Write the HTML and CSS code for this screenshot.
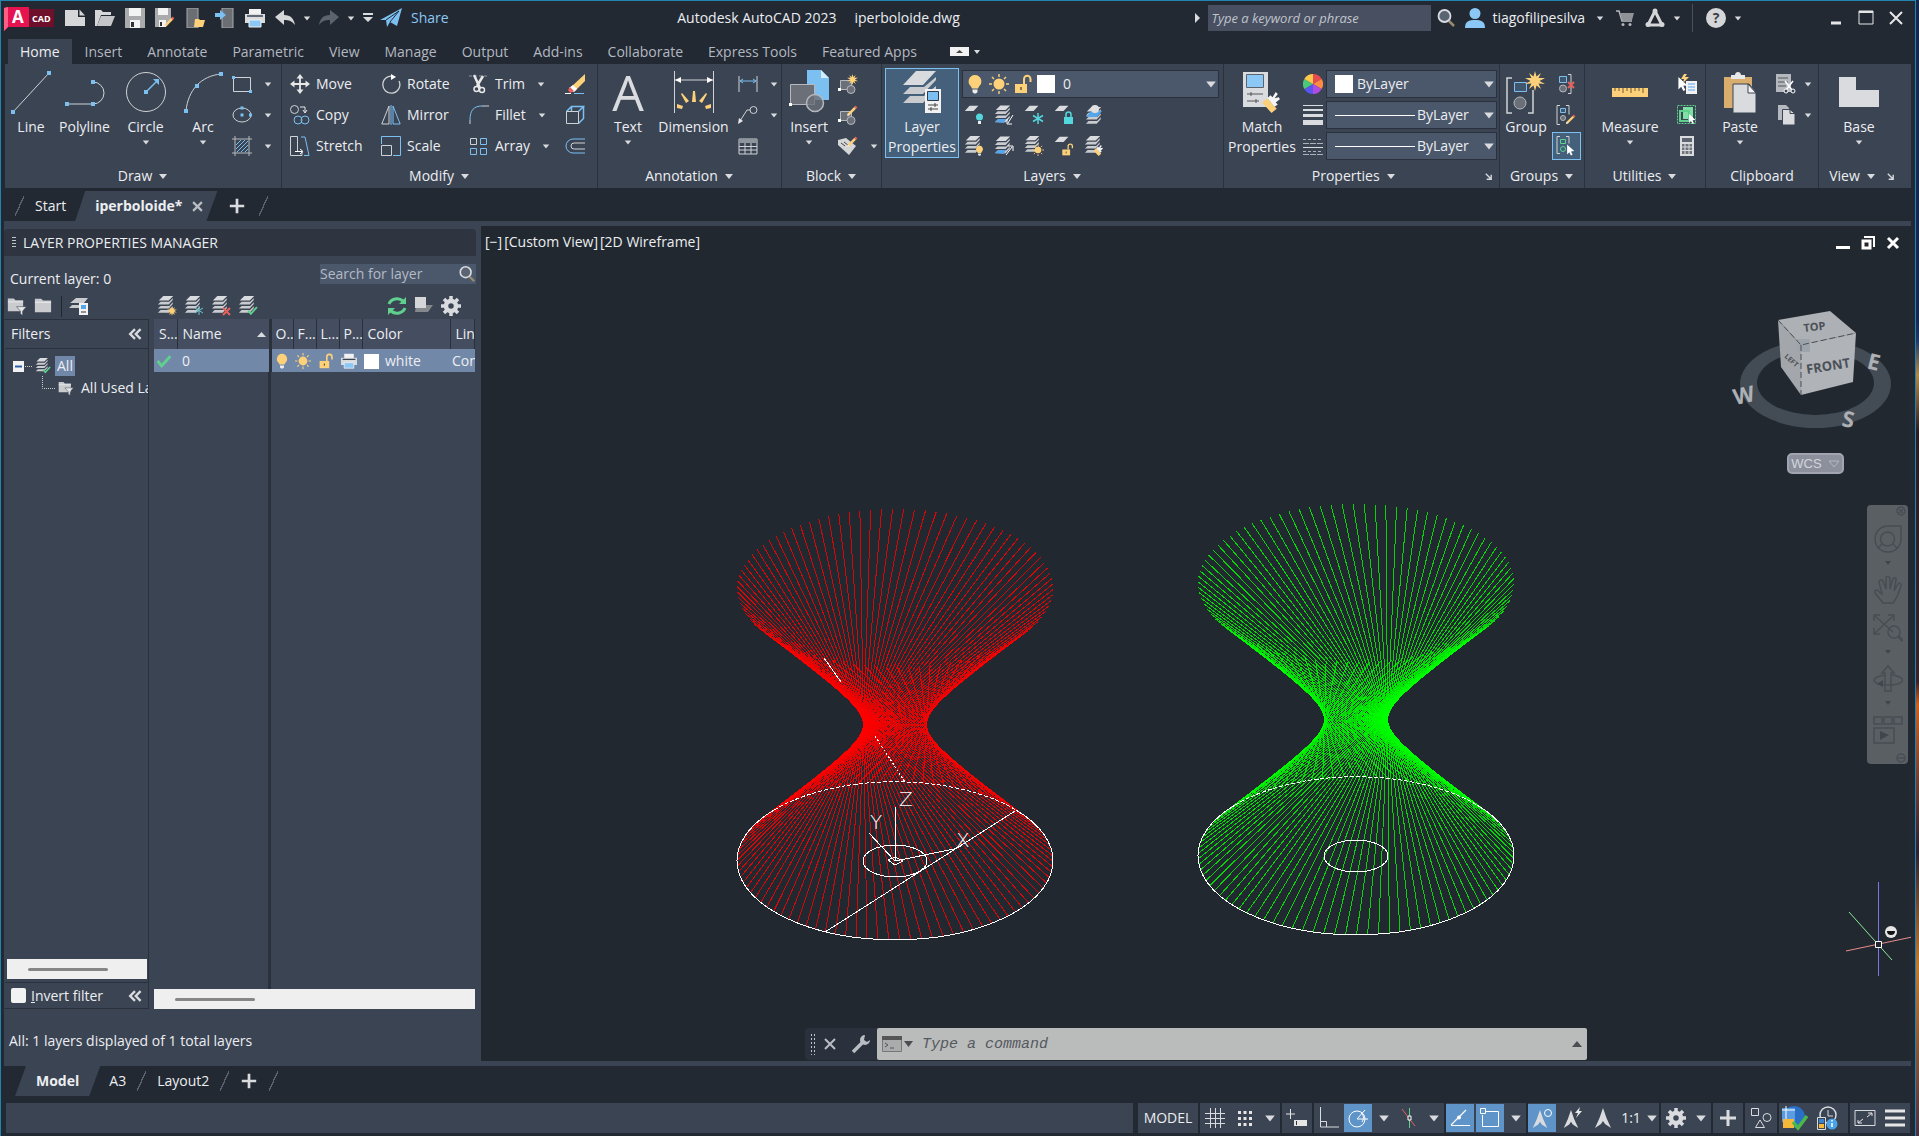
FILE: index.html
```html
<!DOCTYPE html>
<html lang="en">
<head>
<meta charset="utf-8">
<title>Autodesk AutoCAD 2023 - iperboloide.dwg</title>
<link rel="stylesheet" href="styles.css">
</head>
<body>
<svg class="sprite" aria-hidden="true">
  <symbol id="caret" viewBox="0 0 10 10"><path d="M1 3h8l-4 5z" fill="#d9dbde"/></symbol>
  <symbol id="launch" viewBox="0 0 10 10"><path d="M2 2l5 5M8 3v5H3" fill="none" stroke="#d9dbde" stroke-width="1.5"/></symbol>
  <symbol id="plus" viewBox="0 0 20 20"><path d="M10 2v16M2 10h16" stroke="#d9dbde" stroke-width="3"/></symbol>
  <symbol id="lens" viewBox="0 0 20 20"><path d="M13 13l5 5" stroke="#9a8b6c" stroke-width="2.500"/><circle cx="8.500" cy="8" r="6" fill="#5a6473" stroke="#d9dbde" stroke-width="1.800"/></symbol>
  <symbol id="folder" viewBox="0 0 20 20"><path d="M1 3h7l2 2h9v13H1z" fill="#c9cbce"/><path d="M1 7h18" stroke="#f0f0f0"/></symbol>
  <symbol id="layers" viewBox="0 0 20 20"><path d="M7 0h11l-5 5H2z" fill="#d9dbde"/><path d="M1 9.500L4 6.500h9.500L17.500 2.500v2L13 9.500z M1 14l3-3h9.500L17.500 7v2L13 14z M1 18.500l3-3h9.500l4-4v2l-4.500 5z" fill="#c9cbce"/></symbol>
  <symbol id="layer1" viewBox="0 0 20 20"><path d="M7 1h11l-6 6.500H1z" fill="#d9dbde"/></symbol>
  <symbol id="bulb" viewBox="0 0 20 20"><path d="M10 1a6.500 6.500 0 0 1 4 11.500l-1 2H7l-1-2A6.500 6.500 0 0 1 10 1z" fill="#fdd17a"/><path d="M7.500 15.500h5V18l-1.500 1.500H9L7.500 18z" fill="#eee"/></symbol>
  <symbol id="sun" viewBox="0 0 20 20"><circle cx="10" cy="10" r="5.500" fill="#fdd17a"/><path d="M10 0v3M10 17v3M0 10h3M17 10h3M3 3l2 2M15 15l2 2M17 3l-2 2M5 15l-2 2" stroke="#fdd17a" stroke-width="1.400"/></symbol>
  <symbol id="unlock" viewBox="0 0 20 20"><path d="M2 10h12v9H2z" fill="#fdd17a"/><path d="M11 10V5a3 3 0 0 1 6.500 0v3" fill="none" stroke="#fdd17a" stroke-width="2"/><path d="M8 13v3" stroke="#6b5a34" stroke-width="1.500"/></symbol>
  <symbol id="printer" viewBox="0 0 20 20"><path d="M4 1h12v6H4z" fill="#f2f2f2"/><path d="M0 6h20v9H0z" fill="#d9dbde"/><path d="M2 8h16" stroke="#3b4453" stroke-width="1.500"/><path d="M4 12h12v7H4z" fill="#8cc8f5" stroke="#eee"/></symbol>
  <symbol id="check" viewBox="0 0 20 20"><path d="M2 10l5 6L18 4" fill="none" stroke="#5fd08d" stroke-width="3.500"/></symbol>
  <symbol id="pencil" viewBox="0 0 20 20"><path d="M3 14L14 3l3 3L6 17l-4 1z" fill="#fdd17a"/><path d="M13.500 3.500L16 1l3 3-2.500 2.500z" fill="#e8605a"/><path d="M2 18l1-4 3 3z" fill="#eee"/></symbol>
  <symbol id="star" viewBox="0 0 20 20"><path d="M10 0l1.500 5.500L16 2l-2.500 5L20 7l-5.500 3L20 13l-6.500-.5L16 18l-4.500-3.500L10 20l-1.500-5.500L4 18l2.500-5.500L0 13l5.500-3L0 7l6.500 0L4 2l4.500 3.500z" fill="#fdd17a"/></symbol>
  <symbol id="brush" viewBox="0 0 20 20"><path d="M1 10l5-4 9 10-5 4z" fill="#fdd17a"/><path d="M6 6l3-3 2 2 3-5 2 2-3 4 4-1 1 2-4 3 2 2-3 2z" fill="#f5f5f5"/></symbol>
  <symbol id="gear" viewBox="0 0 20 20"><circle cx="10" cy="10" r="5" fill="none" stroke="#d9dbde" stroke-width="4.500"/><path d="M10 0v4M10 16v4M0 10h4M16 10h4M3 3l3 3M14 14l3 3M17 3l-3 3M6 14l-3 3" stroke="#d9dbde" stroke-width="3.500"/></symbol>
  <symbol id="chev" viewBox="0 0 20 20"><path d="M10 4l-6 6 6 6M17 4l-6 6 6 6" fill="none" stroke="#d9dbde" stroke-width="3"/></symbol>
  <symbol id="funnel" viewBox="0 0 20 20"><path d="M1 3h18l-7 8v8l-4-3v-5z" fill="#e6e6e6" stroke="#3b4453"/></symbol>
  <symbol id="arrowhead" viewBox="0 0 20 20"><path d="M10 0l3.500 10L18 20l-6-4-2-3-2 3-6 4 4.500-10z" fill="#d9dbde"/></symbol>
  <symbol id="pointer" viewBox="0 0 20 20"><path d="M2 0l13 12-6 .5 3 6-3 1.500-3-6-4 4z" fill="#fff"/></symbol>
</svg>

<div class="window">
  <header class="titlebar">
    <div class="quick">
      <button class="app-logo" aria-label="Application menu"><svg width="50" height="28" viewBox="0 0 50 28"><path d="M14 5h36v18H14z" fill="#6e0f2c"/><path d="M0 4l4-1h21v20H4l-4 4z" fill="#e5134f"/><path d="M0 4l4-1v20l-4 4z" fill="#ff5d83"/><text class="logo-a" x="8" y="19">A</text><text class="logo-cad" x="28" y="18">CAD</text></svg></button>
      <button class="cell" aria-label="New"><svg width="20" height="20" viewBox="0 0 20 20"><path d="M0 2h13v7h7v9H0z" fill="#d4d6d8"/><path d="M14.500 1.500L20 7.500h-5.500z" fill="#d4d6d8"/></svg></button>
      <button class="cell" aria-label="Open"><svg width="20" height="20" viewBox="0 0 20 20"><path d="M0 18V2h6l2 2h8v3H6L2 18z" fill="#d4d6d8"/><path d="M6 8h14l-4 10H2z" fill="#c3c5c8"/></svg></button>
      <button class="cell" aria-label="Save"><svg width="20" height="20" viewBox="0 0 20 20"><path d="M0 0h20v20H0z" fill="#a9abad"/><path d="M4 0h12v8H4zM5 12h10v8H5z" fill="#f3f3f3"/><path d="M6 14h3v5H6z" fill="#333"/></svg></button>
      <button class="cell" aria-label="Save As"><svg width="20" height="20" viewBox="0 0 20 20"><path d="M0 0h16v12l-6 7H0z" fill="#a9abad"/><path d="M3 0h10v7H3zM4 12h7v7H4z" fill="#f3f3f3"/><path d="M5 14h2v4H5z" fill="#333"/><use href="#pencil" x="8" y="8" width="12" height="12"/></svg></button>
      <button class="cell" aria-label="Open from mobile"><svg width="20" height="20" viewBox="0 0 20 20"><path d="M2 0h11v20H2z" fill="#6b6e72" stroke="#a9abad"/><path d="M10 11h4l1 1h5l-2 7h-9z" fill="#fdd17a"/></svg></button>
      <button class="cell" aria-label="Save to mobile"><svg width="20" height="20" viewBox="0 0 20 20"><path d="M7 0h11v20H7z" fill="#6b6e72" stroke="#a9abad"/><path d="M0 5h5V2l6 5-6 5V9H0z" fill="#7cc0f2"/></svg></button>
      <button class="cell" aria-label="Plot"><svg width="20" height="20"><use href="#printer"/></svg></button>
      <button class="cell" aria-label="Undo"><svg width="20" height="20" viewBox="0 0 20 20"><path d="M0 9l9-7v5c7 0 10 4 11 10-3-4-6-5-11-5v5z" fill="#d4d6d8"/></svg></button>
      <button class="cell slim" aria-label="Undo list"><svg width="8" height="8"><use href="#caret"/></svg></button>
      <button class="cell" aria-label="Redo"><svg width="20" height="20" viewBox="0 0 20 20"><path d="M20 9l-9-7v5C4 7 1 11 0 17c3-4 6-5 11-5v5z" fill="#5d636b"/></svg></button>
      <button class="cell slim" aria-label="Redo list"><svg width="8" height="8"><use href="#caret"/></svg></button>
      <button class="cell mid" aria-label="Customize toolbar"><svg width="10" height="12" viewBox="0 0 10 12"><path d="M0 1h10v2H0zM0 5h10l-5 5z" fill="#d9dbde"/></svg></button>
      <button class="share"><svg width="22" height="20" viewBox="0 0 22 20"><path d="M0 12L22 0l-5 18-7-4-3 5-1-7z" fill="#7cc0f2"/><path d="M6 12L19 3l-9 11" fill="none" stroke="#222933"/></svg>Share</button>
    </div>
    <h1 class="caption"><span>Autodesk AutoCAD 2023</span><span>iperboloide.dwg</span></h1>
    <div class="account">
      <button class="cell mid" aria-label="Toggle search"><svg width="6" height="10" viewBox="0 0 6 10"><path d="M0 0l5 5-5 5z" fill="#d9dbde"/></svg></button>
      <input class="help-search" type="text" placeholder="Type a keyword or phrase" aria-label="Type a keyword or phrase">
      <button class="cell" aria-label="Search"><svg width="20" height="20"><use href="#lens"/></svg></button>
      <button class="user"><svg width="20" height="20" viewBox="0 0 20 20"><circle cx="10" cy="5.500" r="5.500" fill="#8cc8f5"/><path d="M0 20c0-7 4-8 10-8s10 1 10 8z" fill="#8cc8f5"/></svg><span>tiagofilipesilva</span><svg width="8" height="8"><use href="#caret"/></svg></button>
      <button class="cell" aria-label="App store"><svg width="18" height="18" viewBox="0 0 18 18"><path d="M0 2h3l3 10h10" fill="none" stroke="#b5b7ba" stroke-width="1.500"/><path d="M4 4h14l-2 7H6z" fill="#8f9296"/><circle cx="7" cy="15.500" r="1.500" fill="#b5b7ba"/><circle cx="14" cy="15.500" r="1.500" fill="#b5b7ba"/></svg></button>
      <button class="cell" aria-label="Autodesk App"><svg width="20" height="20" viewBox="0 0 20 20"><path d="M10 3L3 17h14z" fill="none" stroke="#d4d6d8" stroke-width="3" stroke-linejoin="round"/><circle cx="10" cy="3" r="2.500" fill="#d4d6d8"/><circle cx="3" cy="16.500" r="2.500" fill="#d4d6d8"/><circle cx="17" cy="16.500" r="2.500" fill="#d4d6d8"/></svg></button>
      <button class="cell slim" aria-label="App list"><svg width="8" height="8"><use href="#caret"/></svg></button>
      <span class="rule"></span>
      <button class="cell help" aria-label="Help"><svg width="20" height="20" viewBox="0 0 20 20"><circle cx="10" cy="10" r="10" fill="#d4d6d8"/><text class="help-mark" x="10" y="15" text-anchor="middle">?</text></svg></button>
      <button class="cell slim" aria-label="Help list"><svg width="8" height="8"><use href="#caret"/></svg></button>
      <div class="winbuttons">
        <button class="cell" aria-label="Minimize"><svg width="16" height="16" viewBox="0 0 16 16"><path d="M3 13h10" stroke="#e6e6e6" stroke-width="3"/></svg></button>
        <button class="cell" aria-label="Maximize"><svg width="16" height="16" viewBox="0 0 16 16"><path d="M1 1h14v13H1z" fill="none" stroke="#e6e6e6"/><path d="M1 2h14" stroke="#e6e6e6" stroke-width="2"/></svg></button>
        <button class="cell" aria-label="Close"><svg width="16" height="16" viewBox="0 0 16 16"><path d="M2 2l12 12M14 2L2 14" stroke="#e6e6e6" stroke-width="2"/></svg></button>
      </div>
    </div>
  </header>

  <nav class="tabs">
    <a href="#home" class="on">Home</a><a href="#insert">Insert</a><a href="#annotate">Annotate</a><a href="#parametric">Parametric</a><a href="#view">View</a><a href="#manage">Manage</a><a href="#output">Output</a><a href="#addins">Add-ins</a><a href="#collaborate">Collaborate</a><a href="#express">Express Tools</a><a href="#featured">Featured Apps</a>
    <button class="minimize" aria-label="Minimize ribbon"><svg width="30" height="10" viewBox="0 0 30 10"><path d="M0 0h19v9H0z" fill="#f2f2f2"/><path d="M6 6h7L9.500 3z" fill="#444"/><path d="M24 3h6l-3 4z" fill="#d9dbde"/></svg></button>
  </nav>

  <section class="ribbon">
    <div class="panel">
      <div class="body draw">
        <button class="big"><svg width="40" height="44" viewBox="0 0 40 44"><path d="M2 42L38 3" stroke="#cfd2d6"/><path d="M0 40h4v4H0zM36 1h4v4h-4z" fill="#7cc0f2"/></svg><span>Line</span></button>
        <button class="big"><svg width="40" height="44" viewBox="0 0 40 44"><path d="M2 34h26a11 11 0 0 0 0-22" fill="none" stroke="#cfd2d6"/><path d="M0 32h4v4H0zM26 32h4v4h-4zM26 10h4v4h-4z" fill="#7cc0f2"/></svg><span>Polyline</span></button>
        <button class="big"><svg width="42" height="44" viewBox="0 0 42 44"><circle cx="21" cy="22" r="19.500" fill="none" stroke="#cfd2d6"/><path d="M21 22L32 11" stroke="#7cc0f2" stroke-width="1.500"/><path d="M19 20h4v4h-4zM28 9h6v6z" fill="#7cc0f2"/></svg><span>Circle</span><svg width="8" height="8"><use href="#caret"/></svg></button>
        <button class="big"><svg width="40" height="44" viewBox="0 0 40 44"><path d="M3 41C5 20 18 6 38 4" fill="none" stroke="#cfd2d6"/><path d="M1 39h4v4H1zM12 14h4v4h-4zM36 2h4v4h-4z" fill="#7cc0f2"/></svg><span>Arc</span><svg width="8" height="8"><use href="#caret"/></svg></button>
        <div class="stack">
          <button class="sm" aria-label="Rectangle"><svg width="20" height="20" viewBox="0 0 20 20"><path d="M1.500 3.500h17v14h-17z" fill="none" stroke="#cfd2d6"/><path d="M0 2h3v3H0zM17 16h3v3h-3z" fill="#7cc0f2"/></svg><svg class="dd" width="8" height="8"><use href="#caret"/></svg></button>
          <button class="sm" aria-label="Ellipse"><svg width="20" height="20" viewBox="0 0 20 20"><ellipse cx="10" cy="10" rx="9" ry="7" fill="none" stroke="#cfd2d6"/><path d="M8.500 8.500h3v3h-3zM17 8.500h3v3h-3zM8.500 1.500h3v3h-3z" fill="#7cc0f2"/></svg><svg class="dd" width="8" height="8"><use href="#caret"/></svg></button>
          <button class="sm" aria-label="Hatch"><svg width="20" height="20" viewBox="0 0 20 20"><path d="M3 0v20M17 0v20M0 3h20M0 17h20" stroke="#b5b9bf"/><path d="M4 9l5-5M4 13l9-9M5 16L16 5M9 16l7-7M13 16l3-3" stroke="#7cc0f2"/></svg><svg class="dd" width="8" height="8"><use href="#caret"/></svg></button>
        </div>
      </div>
      <button class="ptitle">Draw <svg width="10" height="10"><use href="#caret"/></svg></button>
    </div>

    <div class="panel">
      <div class="body modify">
        <div class="stack">
          <button class="sm"><svg width="20" height="20" viewBox="0 0 20 20"><path d="M10 2v16M2 10h16" stroke="#e8e8e8" stroke-width="1.800"/><path d="M10 0l3.500 4.500h-7zM10 20l3.500-4.500h-7zM0 10l4.500-3.500v7zM20 10l-4.500-3.500v7z" fill="#e8e8e8"/></svg>Move</button>
          <button class="sm"><svg width="20" height="20" viewBox="0 0 20 20"><circle cx="4.500" cy="4.500" r="4" fill="none" stroke="#cfd2d6"/><path d="M10 2h5v5M13 5l2 3 2-3" fill="none" stroke="#e8e8e8"/><circle cx="8" cy="15" r="4" fill="none" stroke="#7cc0f2"/><circle cx="15" cy="15" r="4" fill="none" stroke="#7cc0f2"/></svg>Copy</button>
          <button class="sm"><svg width="20" height="20" viewBox="0 0 20 20"><path d="M.5.500h7v15H12v4H.500z" fill="none" stroke="#cfd2d6"/><path d="M11 1h4l4 18.500h-5" fill="none" stroke="#7cc0f2"/><path d="M5 15.500h7M10 13l3 2.500-3 2.500" fill="none" stroke="#fff"/></svg>Stretch</button>
        </div>
        <div class="stack">
          <button class="sm"><svg width="20" height="20" viewBox="0 0 20 20"><path d="M14 3a8.500 8.500 0 1 0 4 4" fill="none" stroke="#cfd2d6" stroke-width="1.300"/><path d="M10 0l5 3-5 3z" fill="#fff"/></svg>Rotate</button>
          <button class="sm"><svg width="20" height="20" viewBox="0 0 20 20"><path d="M8 1v18H.800z" fill="none" stroke="#cfd2d6"/><path d="M12 1v18h7.200z" fill="none" stroke="#7cc0f2"/><path d="M10 0v20" stroke="#7cc0f2"/></svg>Mirror</button>
          <button class="sm"><svg width="20" height="20" viewBox="0 0 20 20"><path d="M.5 8V.500h19v19H12" fill="none" stroke="#7cc0f2"/><path d="M.5 9.500h10v10H.500z" fill="none" stroke="#cfd2d6"/></svg>Scale</button>
        </div>
        <div class="stack">
          <button class="sm"><svg width="20" height="20" viewBox="0 0 20 20"><path d="M0 2h20" stroke="#8f959d" stroke-dasharray="3 2"/><path d="M5 1l6 13M14 2L8 12" stroke="#e8e8e8" stroke-width="2.500"/><circle cx="7.500" cy="15" r="2.500" fill="none" stroke="#e8e8e8" stroke-width="1.500"/><circle cx="13" cy="16" r="2.500" fill="none" stroke="#e8e8e8" stroke-width="1.500"/></svg>Trim<svg class="dd" width="8" height="8"><use href="#caret"/></svg></button>
          <button class="sm"><svg width="20" height="20" viewBox="0 0 20 20"><path d="M1 19v-4" stroke="#cfd2d6"/><path d="M1 15C1 5 5 1 13 1" fill="none" stroke="#7cc0f2"/><path d="M13 1h7" stroke="#cfd2d6"/></svg>Fillet<svg class="dd" width="8" height="8"><use href="#caret"/></svg></button>
          <button class="sm"><svg width="20" height="20" viewBox="0 0 20 20"><path d="M1.500 2.500h6v6h-6z" fill="none" stroke="#cfd2d6"/><path d="M11.500 2.500h6v6h-6zM1.500 12.500h6v6h-6zM11.500 12.500h6v6h-6z" fill="none" stroke="#7cc0f2"/></svg>Array<svg class="dd" width="8" height="8"><use href="#caret"/></svg></button>
        </div>
        <div class="stack">
          <button class="sm" aria-label="Erase"><svg width="20" height="20" viewBox="0 0 20 20"><path d="M0 19.500h6" stroke="#fff"/><path d="M9 19.500h10" stroke="#7cc0f2"/><path d="M20 0v7L10 17l-4-4z" fill="#fdd17a"/><path d="M8 11l4 4-3 3-4-1-1-3z" fill="#fff"/><path d="M5 13l4 4-4 2-2-3z" fill="#e8605a"/></svg></button>
          <button class="sm" aria-label="Explode"><svg width="20" height="20" viewBox="0 0 20 20"><path d="M1.500 6.500l5-5h12l-5 5M18.500 1.500v12l-5 5M6.500 1.500v5" fill="none" stroke="#7cc0f2" stroke-width="1.500"/><path d="M1.500 6.500h12v12h-12z" fill="none" stroke="#cfd2d6"/></svg></button>
          <button class="sm" aria-label="Offset"><svg width="20" height="20" viewBox="0 0 20 20"><path d="M20 3H8a7 7 0 0 0 0 14h12" fill="none" stroke="#7cc0f2"/><path d="M20 7H9a3 3 0 0 0 0 6h11" fill="none" stroke="#cfd2d6"/></svg></button>
        </div>
      </div>
      <button class="ptitle">Modify <svg width="10" height="10"><use href="#caret"/></svg></button>
    </div>

    <div class="panel">
      <div class="body annotation">
        <button class="big"><svg width="34" height="44" viewBox="0 0 34 44"><text class="big-a" x="17" y="41" text-anchor="middle">A</text></svg><span>Text</span><svg width="8" height="8"><use href="#caret"/></svg></button>
        <button class="big"><svg width="40" height="44" viewBox="0 0 40 44"><path d="M.500 1v42M39.500 1v42M1 10h38" stroke="#cfd2d6"/><path d="M1 10l6-3v6zM39 10l-6-3v6z" fill="#fff"/><path d="M18 32h4l-1-11h-2zM25 31l3 2 5-9-1-1zM15 31l-3 2-5-9 1-1zM31 36l1 3 5-1v-4zM9 36l-1 3-5-1v-4z" fill="#fdd17a"/></svg><span>Dimension</span></button>
        <div class="stack">
          <button class="sm" aria-label="Linear"><svg width="20" height="20" viewBox="0 0 20 20"><path d="M1 2v16M19 2v16" stroke="#cfd2d6"/><path d="M2 7h16M5 5L2 7l3 2M15 5l3 2-3 2" fill="none" stroke="#7cc0f2"/></svg><svg class="dd" width="8" height="8"><use href="#caret"/></svg></button>
          <button class="sm" aria-label="Leader"><svg width="20" height="20" viewBox="0 0 20 20"><circle cx="15.500" cy="5" r="3.500" fill="none" stroke="#cfd2d6"/><path d="M12 5H9L2 16" fill="none" stroke="#cfd2d6"/><path d="M0 19l1-6 4 3z" fill="#e8e8e8"/></svg><svg class="dd" width="8" height="8"><use href="#caret"/></svg></button>
          <button class="sm" aria-label="Table"><svg width="20" height="20" viewBox="0 0 20 20"><path d="M1 3h18v15H1zM1 10.500h18M1 14h18M7 6v12M13 6v12" fill="none" stroke="#cfd2d6"/><path d="M1 3h18v4H1z" fill="#8f959d"/></svg></button>
        </div>
      </div>
      <button class="ptitle">Annotation <svg width="10" height="10"><use href="#caret"/></svg></button>
    </div>

    <div class="panel">
      <div class="body block">
        <button class="big"><svg width="40" height="44" viewBox="0 0 40 44"><path d="M18 0h14l8 8v22H18z" fill="#7cc0f2"/><path d="M32 0l8 8h-8z" fill="#d2ebfd"/><path d="M1.500 14.500h24v20h-24z" fill="#6b7078" stroke="#b5b9bf"/><circle cx="26" cy="33" r="8.500" fill="#6b7078" fill-opacity=".8" stroke="#b5b9bf" stroke-width="1.500"/><path d="M0 33h3v3H0z" fill="#fff"/></svg><span>Insert</span><svg width="8" height="8"><use href="#caret"/></svg></button>
        <div class="stack">
          <button class="sm" aria-label="Create block"><svg width="20" height="20" viewBox="0 0 20 20"><path d="M2.500 6.500h11v9h-11z" fill="#6b7078" stroke="#b5b9bf"/><circle cx="13" cy="15.500" r="4" fill="#6b7078" stroke="#b5b9bf"/><path d="M0 14h3v3H0z" fill="#fff"/><use href="#star" x="9" y="0" width="11" height="11"/></svg></button>
          <button class="sm" aria-label="Edit block"><svg width="20" height="20" viewBox="0 0 20 20"><path d="M2.500 6.500h11v9h-11z" fill="#6b7078" stroke="#b5b9bf"/><circle cx="13" cy="15.500" r="4" fill="#6b7078" stroke="#b5b9bf"/><path d="M0 14h3v3H0z" fill="#fff"/><use href="#pencil" x="8" y="0" width="12" height="12"/></svg></button>
          <button class="sm" aria-label="Edit attributes"><svg width="20" height="20" viewBox="0 0 20 20"><path d="M0 4l8-2 10 8-7 9L0 9z" fill="#d4d6d8"/><path d="M3 7l4 3M6 6l5 4" stroke="#444"/><use href="#pencil" x="8" y="0" width="12" height="12"/></svg><svg class="dd" width="8" height="8"><use href="#caret"/></svg></button>
        </div>
      </div>
      <button class="ptitle">Block <svg width="10" height="10"><use href="#caret"/></svg></button>
    </div>

    <div class="panel">
      <div class="body layerpanel">
        <button class="big pressed"><svg width="40" height="44" viewBox="0 0 40 44"><path d="M14 1h20L21 15H1z" fill="#d9dbde"/><path d="M1 24l7-7h14L34 7v3L21 24zM1 33l7-7h14l12-10v3L21 33z" fill="#c9cbce"/><path d="M23 19h16v24H23z" fill="#f2f2f2"/><path d="M25.500 21.500h11v9h-11z" fill="#7cc0f2" stroke="#2d3b4d"/><path d="M26 35h10M26 39h10M33 33v4M29 37v4" stroke="#444"/></svg><span>Layer<br>Properties</span></button>
        <div class="stack">
          <label class="combo"><svg width="20" height="20"><use href="#bulb"/></svg><svg width="20" height="20"><use href="#sun"/></svg><svg width="20" height="20"><use href="#unlock"/></svg><i class="swatch"></i><select aria-label="Layer"><option>0</option></select><svg width="12" height="12"><use href="#caret"/></svg></label>
          <div class="iconrow">
            <button aria-label="Off"><svg width="20" height="20" viewBox="0 0 20 20"><use href="#layer1" width="16" height="16"/><circle cx="15.500" cy="12" r="3.500" fill="#54d7dc"/><path d="M14 16h3v3h-3z" fill="#eee"/></svg></button>
            <button aria-label="Isolate"><svg width="20" height="20" viewBox="0 0 20 20"><use href="#layers" width="18" height="19"/><path d="M1 17l3-3h8l-2 4z" fill="#58a6ea"/><path d="M19 10l-5 8M13 14v5h5" fill="none" stroke="#fff"/></svg></button>
            <button aria-label="Freeze"><svg width="20" height="20" viewBox="0 0 20 20"><use href="#layer1" width="16" height="16"/><path d="M14 8v11M9 10.500l10 6M19 10.500l-10 6" stroke="#54d7dc" stroke-width="1.500"/></svg></button>
            <button aria-label="Lock"><svg width="20" height="20" viewBox="0 0 20 20"><use href="#layer1" width="16" height="16"/><path d="M10 12h9v7h-9z" fill="#54d7dc"/><path d="M12 12V9.500a2.500 2.500 0 0 1 5 0V12" fill="none" stroke="#54d7dc" stroke-width="1.500"/></svg></button>
            <button aria-label="Make current"><svg width="20" height="20" viewBox="0 0 20 20"><use href="#layers" y="2" width="20" height="18"/><path d="M7 6h11l-5 6H2z" fill="#58a6ea"/><circle cx="11" cy="4" r="4" fill="#e0e0e0"/></svg></button>
          </div>
          <div class="iconrow">
            <button aria-label="All on"><svg width="20" height="20" viewBox="0 0 20 20"><use href="#layers" width="18" height="18"/><use href="#bulb" x="10" y="9" width="11" height="11"/></svg></button>
            <button aria-label="Unisolate"><svg width="20" height="20" viewBox="0 0 20 20"><use href="#layers" width="18" height="19"/><path d="M1 17l3-3h8l-2 4z" fill="#58a6ea"/><path d="M12 19l6-8M14 10h5v5" fill="none" stroke="#fff"/></svg></button>
            <button aria-label="Thaw all"><svg width="20" height="20" viewBox="0 0 20 20"><use href="#layers" width="17" height="17"/><use href="#sun" x="8" y="8" width="12" height="12"/></svg></button>
            <button aria-label="Unlock"><svg width="20" height="20" viewBox="0 0 20 20"><use href="#layer1" width="16" height="16"/><use href="#unlock" x="7" y="7" width="13" height="13"/></svg></button>
            <button aria-label="Match layer"><svg width="20" height="20" viewBox="0 0 20 20"><use href="#layers" width="18" height="18"/><use href="#brush" x="9" y="9" width="11" height="11"/></svg></button>
          </div>
        </div>
      </div>
      <button class="ptitle">Layers <svg width="10" height="10"><use href="#caret"/></svg></button>
    </div>

    <div class="panel">
      <div class="body props">
        <button class="big"><svg width="40" height="44" viewBox="0 0 40 44"><path d="M1 2h25v35H1z" fill="#d9dbde"/><path d="M4.500 4.500h17v13h-17z" fill="#8cc8f5" stroke="#5b646f"/><path d="M5 24h16M5 31h12M9 22v4M14 29v4" stroke="#555"/><use href="#brush" x="19" y="22" width="21" height="21"/></svg><span>Match<br>Properties</span></button>
        <div class="stack marks">
          <div class="mark"><svg width="20" height="20" viewBox="-10 -10 20 20"><path d="M0 0V-10A10 10 0 0 1 8.700-5z" fill="#e84c4c"/><path d="M0 0L8.700-5A10 10 0 0 1 8.700 5z" fill="#ff8c42"/><path d="M0 0L8.700 5A10 10 0 0 1 0 10z" fill="#b04ce0"/><path d="M0 0V10A10 10 0 0 1-8.700 5z" fill="#5a55ee"/><path d="M0 0L-8.700 5A10 10 0 0 1-8.700-5z" fill="#4cc87a"/><path d="M0 0L-8.700-5A10 10 0 0 1 0-10z" fill="#fdc84c"/></svg></div>
          <div class="mark"><svg width="20" height="20" viewBox="0 0 20 20"><path d="M0 0h20v1H0zM0 4h20v2H0zM0 9h20v3H0zM0 15h20v5H0z" fill="#d9dbde"/></svg></div>
          <div class="mark"><svg width="20" height="20" viewBox="0 0 20 20"><path d="M0 3.500h20M0 15.500h20" stroke="#aeb2b8" stroke-dasharray="3 2"/><path d="M0 7.500h20M0 18.500h20" stroke="#aeb2b8" stroke-dasharray="6 1"/><path d="M0 11.500h20" stroke="#d9dbde"/></svg></div>
        </div>
        <div class="stack">
          <label class="combo"><i class="swatch"></i><select aria-label="Object color"><option>ByLayer</option></select><svg width="12" height="12"><use href="#caret"/></svg></label>
          <label class="combo"><i class="stroke"></i><select aria-label="Lineweight"><option>ByLayer</option></select><svg width="12" height="12"><use href="#caret"/></svg></label>
          <label class="combo"><i class="stroke"></i><select aria-label="Linetype"><option>ByLayer</option></select><svg width="12" height="12"><use href="#caret"/></svg></label>
        </div>
      </div>
      <div class="titlerow"><button class="ptitle">Properties <svg width="10" height="10"><use href="#caret"/></svg></button><button class="launch" aria-label="Properties palette"><svg width="9" height="9"><use href="#launch"/></svg></button></div>
    </div>

    <div class="panel">
      <div class="body groups">
        <button class="big"><svg width="40" height="44" viewBox="0 0 40 44"><path d="M6 8H1v35h5M22 43h5V20" fill="none" stroke="#cfd2d6" stroke-width="1.500"/><path d="M8.500 12.500h12v9h-12z" fill="#40566d" stroke="#7cc0f2"/><circle cx="14" cy="33" r="6" fill="#6b7078" stroke="#b5b9bf"/><use href="#star" x="19" y="1" width="20" height="20"/></svg><span>Group</span></button>
        <div class="stack">
          <button class="sm" aria-label="Ungroup"><svg width="20" height="20" viewBox="0 0 20 20"><path d="M3.500 2.500h7v6h-7z" fill="#40566d" stroke="#7cc0f2"/><circle cx="7" cy="14.500" r="3.500" fill="#6b7078" stroke="#b5b9bf"/><path d="M12 .500h3v19h-3" fill="none" stroke="#cfd2d6"/><path d="M12 8l6 6M18 8l-6 6" stroke="#e8605a" stroke-width="2"/></svg></button>
          <button class="sm" aria-label="Edit group"><svg width="20" height="20" viewBox="0 0 20 20"><path d="M4 .500H1v19h3M10 .500h3v9" fill="none" stroke="#cfd2d6"/><path d="M4.500 3.500h5v4h-5z" fill="#40566d" stroke="#7cc0f2"/><circle cx="7" cy="13" r="2.500" fill="#6b7078" stroke="#b5b9bf"/><use href="#pencil" x="9" y="9" width="11" height="11"/></svg></button>
          <button class="sm pressed" aria-label="Group selection"><svg width="20" height="20" viewBox="0 0 20 20"><path d="M4 .500H1v17h3M10 .500h3v7" fill="none" stroke="#cfd2d6"/><path d="M4.500 3.500h5v4h-5z" fill="none" stroke="#5fd08d"/><circle cx="7" cy="13" r="2.500" fill="none" stroke="#5fd08d"/><use href="#pointer" x="10" y="8" width="11" height="12"/></svg></button>
        </div>
      </div>
      <button class="ptitle">Groups <svg width="10" height="10"><use href="#caret"/></svg></button>
    </div>

    <div class="panel">
      <div class="body utils">
        <button class="big"><svg width="40" height="44" viewBox="0 0 40 44"><path d="M2 18h36v9H2z" fill="#fdd17a"/><path d="M5 18v3M9 18v3M13 18v5M17 18v3M21 18v5M25 18v3M29 18v3M33 18v5" stroke="#70592c"/></svg><span>Measure</span><svg width="8" height="8"><use href="#caret"/></svg></button>
        <div class="stack">
          <button class="sm" aria-label="Quick select"><svg width="20" height="20" viewBox="0 0 20 20"><path d="M9 7h11v13H9z" fill="#f2f2f2"/><path d="M11 10h7M11 13h7M11 16h7" stroke="#58a6ea"/><use href="#pointer" x="0" y="2" width="14" height="16"/><path d="M7 0L4 5h3l-1 4 6-6H8l2-3z" fill="#fdd17a"/></svg></button>
          <button class="sm" aria-label="Select all"><svg width="20" height="20" viewBox="0 0 20 20"><path d="M.500.500h18v18H.500z" fill="none" stroke="#5fd08d" stroke-dasharray="2 1"/><path d="M6 2h10v12H6z" fill="#7fe0a5"/><path d="M3 6h9v10H3z" fill="none" stroke="#5fd08d" stroke-width="2"/><use href="#pointer" x="11" y="8" width="10" height="12"/></svg></button>
          <button class="sm" aria-label="Calculator"><svg width="20" height="20" viewBox="0 0 20 20"><path d="M3 0h14v20H3z" fill="#d9dbde"/><path d="M5 2h10v4H5z" fill="#5b646f"/><path d="M5 8h10v10H5z" fill="#70757c"/><path d="M5 11h10M5 14.500h10M8 8v10M12 8v10" stroke="#d9dbde"/></svg></button>
        </div>
      </div>
      <button class="ptitle">Utilities <svg width="10" height="10"><use href="#caret"/></svg></button>
    </div>

    <div class="panel">
      <div class="body clip">
        <button class="big"><svg width="34" height="44" viewBox="0 0 34 44"><path d="M1 7h28v31H1z" fill="#d9ad6e"/><path d="M8 9V5h4c0-4 6-4 6 0h4v4z" fill="#e8e8e8"/><path d="M10 14h16l7 8v21H10z" fill="#d9dbde" stroke="#3b4453"/><path d="M25 14v9h8z" fill="#f5f5f5" stroke="#3b4453"/></svg><span>Paste</span><svg width="8" height="8"><use href="#caret"/></svg></button>
        <div class="stack">
          <button class="sm" aria-label="Cut"><svg width="20" height="20" viewBox="0 0 20 20"><path d="M0 0h15v18H0z" fill="#b5b9bf"/><path d="M2 4h10M2 8h10M2 12h8" stroke="#555"/><path d="M9 7l7 9M17 7l-7 9" stroke="#fff" stroke-width="1.500"/><circle cx="10" cy="17" r="2" fill="#3b4453" stroke="#fff"/><circle cx="17" cy="17" r="2" fill="#3b4453" stroke="#fff"/></svg><svg class="dd" width="8" height="8"><use href="#caret"/></svg></button>
          <button class="sm" aria-label="Copy"><svg width="20" height="20" viewBox="0 0 20 20"><path d="M2 0h8l3 3v12H2z" fill="#b5b9bf"/><path d="M6.500 4.500H14l5 4V20H6.500z" fill="#d9dbde" stroke="#3b4453"/><path d="M14 4.500v4h5" fill="none" stroke="#3b4453"/></svg><svg class="dd" width="8" height="8"><use href="#caret"/></svg></button>
        </div>
      </div>
      <span class="ptitle">Clipboard</span>
    </div>

    <div class="panel">
      <div class="body base">
        <button class="big"><svg width="40" height="44" viewBox="0 0 40 44"><path d="M0 7h17v13h23v17H0z" fill="#d9dbde"/></svg><span>Base</span><svg width="8" height="8"><use href="#caret"/></svg></button>
      </div>
      <div class="titlerow"><button class="ptitle">View <svg width="10" height="10"><use href="#caret"/></svg></button><button class="launch" aria-label="View settings"><svg width="9" height="9"><use href="#launch"/></svg></button></div>
    </div>
  </section>

  <nav class="filetabs">
    <i class="slash"></i><a href="#start">Start</a>
    <a href="#iperboloide" class="active">iperboloide*<svg width="11" height="11" viewBox="0 0 10 10"><path d="M1 1l8 8M9 1L1 9" stroke="#b9bdc3" stroke-width="2"/></svg></a>
    <button aria-label="New drawing"><svg width="18" height="18"><use href="#plus"/></svg></button><i class="slash"></i>
  </nav>

  <main class="work">
    <aside class="palette">
      <h2><i class="grip"></i>LAYER PROPERTIES MANAGER</h2>
      <div class="current"><span>Current layer: 0</span><label class="layersearch"><input type="text" placeholder="Search for layer" aria-label="Search for layer"><svg width="18" height="18"><use href="#lens"/></svg></label></div>
      <div class="toolrow">
        <div class="group first">
          <button aria-label="New property filter"><svg width="20" height="20" viewBox="0 0 20 20"><use href="#folder" width="17" height="17"/><use href="#funnel" x="9" y="9" width="11" height="11"/></svg></button>
          <button aria-label="New group filter"><svg width="20" height="20" viewBox="0 0 20 20"><use href="#folder" width="18" height="18"/></svg></button>
          <i class="vrule"></i>
          <button aria-label="Layer states"><svg width="20" height="20" viewBox="0 0 20 20"><path d="M7 2h12l-4 5H1zM3 9h7v3H0z" fill="#c9cbce"/><path d="M10 7h9v12h-9z" fill="#f2f2f2"/><path d="M12 9h5v4h-5z" fill="#58a6ea"/><path d="M12 16h5" stroke="#333"/></svg></button>
        </div>
        <div class="group">
          <button aria-label="New layer"><svg width="20" height="20" viewBox="0 0 20 20"><use href="#layers" width="18" height="18"/><use href="#star" x="10" y="10" width="10" height="10"/></svg></button>
          <button aria-label="New frozen layer"><svg width="20" height="20" viewBox="0 0 20 20"><use href="#layers" width="18" height="18"/><path d="M15 10v9M11 12l8 5M19 12l-8 5" stroke="#6fc4cf"/></svg></button>
          <button aria-label="Delete layer"><svg width="20" height="20" viewBox="0 0 20 20"><use href="#layers" width="18" height="18"/><path d="M12 12l7 7M19 12l-7 7" stroke="#e8605a" stroke-width="2"/></svg></button>
          <button aria-label="Set current"><svg width="20" height="20" viewBox="0 0 20 20"><use href="#layers" width="18" height="18"/><use href="#check" x="9" y="9" width="11" height="11"/></svg></button>
        </div>
        <div class="group last">
          <button aria-label="Refresh"><svg width="20" height="20" viewBox="0 0 20 20"><path d="M2 8a8.500 7.500 0 0 1 14-3M18 12a8.500 7.500 0 0 1-14 3" fill="none" stroke="#5fd08d" stroke-width="3"/><path d="M19 1v7h-7zM1 19v-7h7z" fill="#5fd08d"/></svg></button>
          <button aria-label="Toggle override"><svg width="20" height="20" viewBox="0 0 20 20"><path d="M2 10l-1 6h13l5-7h-7" fill="#85888c"/><path d="M1 1h11v11H1z" fill="#d4d6d8"/></svg></button>
          <button aria-label="Settings"><svg width="20" height="20"><use href="#gear"/></svg></button>
        </div>
      </div>
      <div class="lists">
        <div class="filters">
          <div class="fhead">Filters<svg width="16" height="16"><use href="#chev"/></svg></div>
          <ul class="tree">
            <li><svg width="20" height="12" viewBox="0 0 20 12"><path d="M0 1h11v11H0z" fill="#f2f2f2"/><path d="M2 6.500h7" stroke="#2d5fa8" stroke-width="2"/><path d="M12 6.500h8" stroke="#ccc" stroke-dasharray="1 1"/></svg><svg width="16" height="16" viewBox="0 0 20 20"><use href="#layers" width="18" height="18"/><use href="#check" x="9" y="9" width="11" height="11"/></svg><b>All</b></li>
            <li class="child"><svg width="14" height="24" viewBox="0 0 14 24"><path d="M.500 0v12.500H14" fill="none" stroke="#ccc" stroke-dasharray="1 1"/></svg><svg width="16" height="16" viewBox="0 0 20 20"><use href="#folder" width="17" height="17"/><use href="#funnel" x="8" y="8" width="12" height="12"/></svg>All Used Layers</li>
          </ul>
          <div class="scroll"><i></i></div>
          <div class="invert"><label><input type="checkbox"><span><u>I</u>nvert filter</span></label><svg width="16" height="16"><use href="#chev"/></svg></div>
        </div>
        <div class="layertable">
          <table>
            <thead><tr><th class="c-s">S...</th><th class="c-name">Name<svg width="9" height="5" viewBox="0 0 9 5"><path d="M0 5h9L4.500 0z" fill="#d9dbde"/></svg></th><th class="c-i">O..</th><th class="c-i">F...</th><th class="c-i">L...</th><th class="c-i">P...</th><th class="c-color">Color</th><th>Linetype</th></tr></thead>
            <tbody><tr><td><svg width="16" height="16"><use href="#check"/></svg></td><td class="c-name">0</td><td><svg width="16" height="16"><use href="#bulb"/></svg></td><td><svg width="16" height="16"><use href="#sun"/></svg></td><td><svg width="16" height="16"><use href="#unlock"/></svg></td><td><svg width="16" height="16"><use href="#printer"/></svg></td><td><i class="swatch small"></i>white</td><td>Continuous</td></tr></tbody>
          </table>
          <div class="scroll"><i></i></div>
        </div>
      </div>
      <p class="count">All: 1 layers displayed of 1 total layers</p>
    </aside>

    <section class="drawing">
      <svg class="model" width="100%" height="100%" aria-label="Model space">
        <g id="red" class="ruled red"></g>
        <g id="green" class="ruled green"></g>
        <g class="wire">
          <path d="M293 584A158 79 0 1 0 535 584"/>
          <path d="M293 584A158 79 0 0 1 535 584" stroke-dasharray="4 2"/>
          <ellipse cx="414" cy="635" rx="32" ry="16"/>
          <path d="M343 432L360 456M344 706L534 585"/>
          <path d="M394 510L424 556" stroke-dasharray="2 2"/>
          <path d="M414 635V581M414 635L473 623L480 620M414 635L388 607M407 634l7-3 8 4-8 4z"/>
          <path d="M754 579A158 79 0 1 0 996 579"/>
          <path d="M754 579A158 79 0 0 1 996 579" stroke-dasharray="4 2"/>
          <ellipse cx="875" cy="630" rx="32" ry="16"/>
        </g>
        <g class="ucs"><text x="418" y="580">Z</text><text x="389" y="603">Y</text><text x="475" y="621">X</text></g>
      </svg>

      <div class="viewlabel"><button>[−]</button><button>[Custom View]</button><button>[2D Wireframe]</button></div>
      <div class="viewbuttons">
        <button aria-label="Minimize view"><svg width="14" height="14" viewBox="0 0 14 14"><path d="M0 10h14v3H0z" fill="#fff"/></svg></button>
        <button aria-label="Restore view"><svg width="14" height="14" viewBox="0 0 14 14"><path d="M2 5h7v7H2z" fill="none" stroke="#fff" stroke-width="3"/><path d="M3 1h10v10" fill="none" stroke="#fff" stroke-width="2"/></svg></button>
        <button aria-label="Close view"><svg width="14" height="14" viewBox="0 0 14 14"><path d="M2 2l10 10M12 2L2 12" stroke="#fff" stroke-width="3"/></svg></button>
      </div>

      <div class="viewcube">
        <svg width="166" height="130" viewBox="0 0 166 130">
          <path fill-rule="evenodd" fill="#434b55" d="M9 78a75.500 44 0 1 0 151 0a75.500 44 0 1 0-151 0zM26 77a58.500 32 0 1 0 117 0a58.500 32 0 1 0-117 0z"/>
          <path d="M47 14L99 5l26 22-55 12z" fill="#adb0b4"/>
          <path d="M47 14l23 25v50L50 61z" fill="#a3a6aa"/>
          <path d="M70 39l55-12-3 49-52 13z" fill="#b0b3b7"/>
          <path d="M66 33h13v13H66z" fill="#9ea4ab"/>
          <path d="M47 14l23 25 55-12M70 39v50" fill="none" stroke="#4b5057" stroke-dasharray="6 3"/>
          <text class="face top" transform="translate(73 26) rotate(-7)">TOP</text>
          <text class="face left" transform="translate(53 51) rotate(42)">LEFT</text>
          <text class="face front" transform="translate(76 68) rotate(-9)">FRONT</text>
          <text class="compass" transform="translate(4 99) rotate(-12)">W</text>
          <text class="compass" transform="translate(110 120) rotate(10)">S</text>
          <text class="compass" transform="translate(135 62) rotate(14)">E</text>
        </svg>
        <button class="wcs">WCS<svg width="12" height="8" viewBox="0 0 12 8"><path d="M1 1h10L6 7z" fill="none" stroke="#b4b7c2"/></svg></button>
      </div>

      <div class="navbar">
        <svg class="corner" width="10" height="10" viewBox="0 0 10 10"><circle cx="5" cy="5" r="4" /><path d="M3 3l4 4M7 3L3 7"/></svg>
        <button aria-label="Wheel"><svg width="30" height="30" viewBox="0 0 30 30"><path d="M15 2h13v13A13 13 0 1 1 15 2z"/><circle cx="14.500" cy="15" r="7"/><path d="M5 24l4-4M24 24l-4-4"/></svg><svg width="8" height="8"><path class="solid" d="M1 2h6L4 6z"/></svg></button>
        <button aria-label="Pan"><svg width="30" height="30" viewBox="0 0 30 30"><path d="M10 28l-8-10c-1-2 0-3 2-3l5 4L6 7c0-2 3-3 4-1l3 8V3c0-2 3-2 4 0v11l3-10c1-2 4-1 3 1l-2 11 4-7c1-2 4 0 3 2l-4 11-4 6z"/></svg></button>
        <button aria-label="Zoom"><svg width="30" height="30" viewBox="0 0 30 30"><path d="M2 3l18 16M20 3L2 20M1 8V2h6M15 2h6v6M1 15v6h6"/><circle cx="21" cy="19" r="6"/><path d="M25 23l5 5" stroke-width="3"/></svg><svg width="8" height="8"><path class="solid" d="M1 2h6L4 6z"/></svg></button>
        <button aria-label="Orbit"><svg width="30" height="30" viewBox="0 0 30 30"><path d="M12 27V9H9l6-7 6 7h-3v18z"/><path d="M11 11C-5 14 0 21 15 21s22-7 4-10"/><path class="solid" d="M4 20l6-4v7z"/></svg><svg width="8" height="8"><path class="solid" d="M1 2h6L4 6z"/></svg></button>
        <button aria-label="Show motion"><svg width="30" height="30" viewBox="0 0 30 30"><path d="M1 2h8v7H1zM11 2h8v7h-8zM21 2h8v7h-8zM1 13h20v15H1z"/><path class="solid" d="M7 16l9 4-9 5z"/></svg></button>
        <svg class="corner" width="10" height="10" viewBox="0 0 10 10"><circle cx="5" cy="5" r="4"/><path d="M2 5h6"/></svg>
      </div>

      <svg class="cursor" width="70" height="98" viewBox="0 0 70 98"><path d="M34.500 2v94" stroke="#7a78e6"/><path d="M2 71L68 57" stroke="#e98b8b"/><path d="M5 32l43 48" stroke="#8be99a"/><path d="M31.500 61.500h6v6h-6z" fill="#212830" stroke="#fff"/><circle cx="47" cy="52" r="6" fill="#e6e6e6"/><path d="M43 51h8a4 4 0 0 1-8 0z" fill="#111"/></svg>

      <div class="command">
        <div class="handle"><i class="dots"></i>
          <button aria-label="Close command line"><svg width="12" height="12" viewBox="0 0 12 12"><path d="M1 1l10 10M11 1L1 11" stroke="#b9bdc3" stroke-width="2"/></svg></button>
          <button class="wrench" aria-label="Customize"><svg width="20" height="20" viewBox="0 0 20 20"><path d="M2 18L12 8" stroke="#b9bdc3" stroke-width="3.500"/><path d="M14 1a5 5 0 1 0 5 5l-3 2-3-2z" fill="#b9bdc3"/></svg></button>
        </div>
        <label class="prompt"><svg width="32" height="18" viewBox="0 0 32 18"><path d="M.500 1.500h19v15H.500z" fill="#a9abad" stroke="#777"/><path d="M0 1h20v4H0z" fill="#555"/><path d="M3 8l3 2-3 2M8 13h4" fill="none" stroke="#555"/><path d="M22 6h9l-4.500 6z" fill="#4a4d52"/></svg><input type="text" placeholder="Type a command" aria-label="Type a command"><svg width="10" height="8" viewBox="0 0 10 8"><path d="M0 7h10L5 1z" fill="#4a4d52"/></svg></label>
      </div>
    </section>
  </main>

  <nav class="layouts">
    <a href="#model" class="active">Model</a><a href="#a3">A3</a><i class="slash"></i><a href="#layout2">Layout2</a><i class="slash"></i><button aria-label="New layout"><svg width="18" height="18"><use href="#plus"/></svg></button><i class="slash"></i>
  </nav>

  <footer class="status">
    <div class="filler"></div>
    <div class="set"><button class="text">MODEL</button></div>
    <div class="set"><button aria-label="Grid"><svg width="20" height="20" viewBox="0 0 20 20"><path d="M5.500 0v20M10.500 0v20M15.500 0v20M0 5.500h20M0 10.500h20M0 15.500h20" stroke="#d9dbde"/></svg></button><button aria-label="Snap"><svg width="18" height="18" viewBox="0 0 18 18"><path d="M2 3.500h14M2 9.500h14M2 15.500h14" stroke="#e6e6e6" stroke-width="3" stroke-dasharray="3 2.500"/></svg></button><button class="drop" aria-label="Snap options"><svg width="12" height="12"><use href="#caret"/></svg></button></div>
    <div class="set"><button aria-label="Dynamic input"><svg width="22" height="20" viewBox="0 0 22 20"><path d="M4.500 1v10M0 6h9" stroke="#e6e6e6"/><path d="M8 12h13v6H8z" fill="#e6e6e6"/><path d="M10.500 13v4" stroke="#333"/></svg></button></div>
    <div class="set"><button aria-label="Ortho"><svg width="22" height="22" viewBox="0 0 22 22"><path d="M2.500 0v20H21M2.500 14.500h6V20" fill="none" stroke="#d9dbde"/></svg></button><button class="on" aria-label="Polar"><svg width="22" height="22" viewBox="0 0 22 22"><circle cx="10" cy="12" r="8" fill="none" stroke="#fff"/><path d="M10 12h11M10 12l8-9M14 6c3 2 3 6 1 9" fill="none" stroke="#fff"/></svg></button><button class="drop" aria-label="Polar options"><svg width="12" height="12"><use href="#caret"/></svg></button><button aria-label="Isometric"><svg width="20" height="20" viewBox="0 0 20 20"><path d="M10.500 0v20" stroke="#5fd08d"/><path d="M3 1l13 17" stroke="#e8605a"/><path d="M9 8h3v4H9z" fill="#3b4453" stroke="#fff"/></svg></button><button class="drop" aria-label="Isometric options"><svg width="12" height="12"><use href="#caret"/></svg></button></div>
    <div class="set"><button class="on" aria-label="Tracking"><svg width="22" height="22" viewBox="0 0 22 22"><path d="M2 18.500h19M2 18L17 3" stroke="#fff" stroke-width="1.200"/><circle cx="10" cy="10.500" r="2" fill="#fff"/></svg></button><button class="on" aria-label="Object snap"><svg width="22" height="22" viewBox="0 0 22 22"><path d="M6 4.500h13.500v15h-16V8" fill="none" stroke="#fff"/><path d="M1.500 1.500h5v5h-5z" fill="#5f94c9" stroke="#fff"/></svg></button><button class="drop" aria-label="Snap modes"><svg width="12" height="12"><use href="#caret"/></svg></button></div>
    <div class="set"><button class="on" aria-label="Annotation visibility"><svg width="22" height="22" viewBox="0 0 22 22"><use href="#arrowhead" y="2" width="18" height="20"/><circle cx="17" cy="6" r="3.500" fill="none" stroke="#fff"/></svg></button><button aria-label="Auto scale"><svg width="22" height="22" viewBox="0 0 22 22"><use href="#arrowhead" y="2" width="18" height="20"/><path d="M18 0l-5 6h3l-2 5 6-7h-3z" fill="#e6e6e6"/></svg></button><button aria-label="Annotation scale"><svg width="20" height="20"><use href="#arrowhead"/></svg></button><button class="text scale">1:1</button><button class="drop near" aria-label="Scale list"><svg width="12" height="12"><use href="#caret"/></svg></button></div>
    <div class="set"><button aria-label="Workspace"><svg width="20" height="20"><use href="#gear"/></svg></button><button class="drop" aria-label="Workspace list"><svg width="12" height="12"><use href="#caret"/></svg></button></div>
    <div class="set"><button aria-label="Annotation monitor"><svg width="20" height="20"><use href="#plus"/></svg></button></div>
    <div class="set"><button class="wide" aria-label="Isolate objects"><svg width="22" height="22" viewBox="0 0 22 22"><path d="M1.500 1.500h7v7h-7zM10 13l4.500 7.500h-9z" fill="none" stroke="#d9dbde"/><circle cx="17" cy="10.500" r="4" fill="none" stroke="#d9dbde"/></svg></button></div>
    <div class="set perf"><button class="wide" aria-label="Graphics performance"><svg width="26" height="26" viewBox="0 0 26 26"><circle cx="12" cy="12" r="11" fill="#2a6fc4"/><path d="M0 3h13v14H0z" fill="#5b9ce0"/><path d="M0 5h13M4 1v16" stroke="#fff"/><path d="M1 14h11v9H1z" fill="#f5b83a"/><path d="M11 17l5 6 9-12" fill="none" stroke="#4db848" stroke-width="3.500"/></svg></button><button class="wide" aria-label="Drawing history"><svg width="24" height="24" viewBox="0 0 24 24"><circle cx="13" cy="9" r="8" fill="none" stroke="#d9dbde" stroke-width="1.500"/><path d="M13 4v6h5" fill="none" stroke="#d9dbde"/><path d="M2.500 11.500h8v12h-8z" fill="#3b4453" stroke="#d9dbde"/><path d="M4 13h5v4H4z" fill="#3b82cc"/><path d="M4 18h5v4H4z" fill="#f5b83a"/><circle cx="17" cy="18" r="5.500" fill="#4aa3e8"/><path d="M17 17v4M17 14v1.500" stroke="#fff" stroke-width="1.500"/></svg></button></div>
    <div class="set"><button aria-label="Clean screen"><svg width="22" height="20" viewBox="0 0 22 20"><path d="M1 2.500h20v15H1z" fill="none" stroke="#d9dbde"/><path d="M13 9l5-4M14 5h4v3M9 11l-5 4M4 12v3h4" fill="none" stroke="#e6e6e6"/></svg></button><button aria-label="Customization"><svg width="22" height="20" viewBox="0 0 22 20"><path d="M1 3h20M1 10h20M1 17h20" stroke="#e6e6e6" stroke-width="3"/></svg></button></div>
  </footer>
</div>
<script src="surface.js"></script>
</body>
</html>
```

FILE: styles.css
```css
:root {
  --dark: #222933;
  --panel: #3b4453;
  --field: #4b586c;
  --line: #2a313d;
  --text: #eceef1;
  --blue: #2284b0;
}
* { box-sizing: border-box; }
html, body { height: 100%; }
body {
  margin: 0;
  padding-right: 3px;
  color: var(--text);
  font: 14px/20px "Open Sans", "Noto Sans", sans-serif;
  background: linear-gradient(#14284f 0 28%, #1d3a66 30%, #b08a4a 33%, #2a1c22 38%, #3a2226 60%, #d2601a 62%, #7a4330 68%, #2c2230 75%, #c47a2a 85%, #4a3040 100%);
  overflow: hidden;
}
button, input, select { font: inherit; color: inherit; }
button { padding: 0; border: 0; background: none; display: flex; align-items: center; justify-content: center; }
a { color: inherit; text-decoration: none; }
i { font-style: normal; }
svg { flex: none; display: block; }
.sprite { position: absolute; width: 0; height: 0; }

.window {
  height: 100vh;
  min-height: 700px;
  display: flex;
  flex-direction: column;
  background: var(--dark);
  border: 1px solid var(--blue);
  border-bottom: 0;
  padding: 0 4px 3px 3px;
}

/* title bar */
.titlebar { display: flex; height: 38px; padding-bottom: 4px; align-items: center; }
.quick, .account, .winbuttons { display: flex; align-items: center; }
.cell { width: 30px; height: 28px; }
.cell.slim { width: 14px; }
.cell.mid { width: 20px; }
.app-logo { width: 56px; justify-content: flex-start; }
.logo-a { font: bold 17px "Open Sans", sans-serif; fill: #fff; }
.logo-cad { font: bold 9px "Open Sans", sans-serif; fill: #fff; }
.share { gap: 9px; margin-left: 2px; color: #8cc8f5; }
.caption { flex: 1; display: flex; justify-content: center; gap: 18px; margin: 0; font-size: 14px; font-weight: 400; white-space: nowrap; }
.help-search { width: 223px; height: 26px; border: 0; border-radius: 0; padding: 0 3px; background: #474f61; font-size: 13px; font-style: italic; }
.help-search::placeholder { color: #c0c4cb; opacity: 1; }
.user { gap: 7px; padding: 0 6px 0 4px; }
.user span { margin-right: 4px; }
.rule { width: 1px; height: 28px; margin: 0 8px; background: #4a505a; }
.help-mark { font: bold 14px "Open Sans", sans-serif; fill: #3b3f46; }
.winbuttons { margin-left: 76px; }

/* ribbon tabs */
.tabs { display: flex; gap: 1px; height: 25px; padding-left: 4px; color: #b3b8c0; }
.tabs a { padding: 0 12px; line-height: 26px; }
.tabs .on { background: var(--panel); color: var(--text); }
.minimize { margin-left: 20px; }

/* ribbon */
.ribbon {
  display: grid;
  grid-template-columns: 277fr 316fr 184fr 100fr 342fr 276fr 85fr 121fr 113fr 92fr;
  height: 124px;
  margin-left: 1px;
  background: var(--panel);
}
.panel { display: flex; flex-direction: column; min-width: 0; border-right: 1px solid var(--line); }
.panel:last-child { border-right: 0; }
.body { flex: 1; display: grid; padding-top: 4px; }
.draw { grid-template-columns: 52px 55px 67px 48px 1fr; }
.modify { grid-template-columns: 91px 88px 96px 1fr; padding-left: 8px; }
.annotation { grid-template-columns: 60px 71px 1fr; }
.block { grid-template-columns: 54px 1fr; }
.layerpanel { grid-template-columns: 74px 1fr; column-gap: 3px; padding: 4px 4px 0 3px; }
.props { grid-template-columns: 76px 26px 1fr; padding-right: 2px; }
.groups { grid-template-columns: 52px 1fr; }
.utils { grid-template-columns: 90px 1fr; }
.clip { grid-template-columns: 68px 1fr; }
.base { grid-template-columns: 80px; }
.big { flex-direction: column; justify-content: flex-start; padding-top: 2px; height: 90px; line-height: 20px; text-align: center; white-space: nowrap; }
.big span { margin: 3px 0 1px; }
.big-a { font: 50px "Open Sans", sans-serif; fill: #d9dbde; }
.pressed { background: #44607a; border: 1px solid #7cc0f2; }
.big.pressed { padding-top: 1px; }
.stack { display: flex; flex-direction: column; gap: 3px; padding: 2px 0 0 5px; }
.sm { height: 28px; gap: 6px; justify-content: flex-start; white-space: nowrap; }
.sm .dd { margin-left: 6px; }
.modify .stack { padding-left: 0; }
.annotation .stack { padding-left: 9px; }
.block .stack { padding-left: 2px; }
.layerpanel .stack, .props .stack { padding-left: 0; }
.groups .stack { padding-left: 0; }
.groups .sm { width: 29px; padding-left: 4px; }
.groups .sm.pressed { padding-left: 3px; }
.utils .stack { padding-left: 2px; }
.clip .stack { padding-left: 2px; }
.clip .sm { gap: 2px; }
.combo { display: flex; align-items: center; height: 28px; padding: 0 1px 0 8px; background: var(--field); border: 1px solid var(--line); }
.layerpanel .combo { gap: 4px; padding-left: 2px; }
.combo select { flex: 1; min-width: 0; appearance: none; border: 0; background: none; padding: 0 0 0 4px; }
.combo option { color: #111; }
.swatch { display: inline-block; width: 18px; height: 18px; background: #fff; }
.props .combo .stroke { width: 80px; height: 1px; background: #fff; }
.props .combo .stroke + select { padding-left: 2px; }
.iconrow { display: flex; gap: 10px; height: 28px; padding-left: 2px; }
.mark { display: flex; height: 28px; align-items: center; padding-left: 3px; }
.ptitle { height: 24px; gap: 6px; display: flex; align-items: center; justify-content: center; width: 100%; }
.titlerow { display: flex; padding-right: 6px; }
.launch { width: 10px; height: 24px; }
.panel:last-child .titlerow { padding-right: 16px; }

/* drawing and layout tabs */
.filetabs, .layouts { display: flex; align-items: center; }
.filetabs { height: 33px; padding: 3px 0 0 11px; }
.filetabs a:not(.active) { margin: 0 9px 0 11px; }
.filetabs .active { display: flex; align-items: center; gap: 10px; height: 30px; padding: 0 14px 0 20px; font-weight: 700; background: var(--panel); clip-path: polygon(10px 0, 100% 0, calc(100% - 11px) 100%, 0 100%); }
.filetabs button { width: 40px; margin-right: 2px; }
.slash { width: 9px; height: 20px; background: linear-gradient(114deg, transparent 46%, #5b6370 46% 54%, transparent 54%); }
.layouts { height: 37px; padding: 0 0 7px 11px; }
.layouts a { margin: 0 11px; }
.layouts .active { margin: 0 -2px 0 0; padding: 0 21px; line-height: 30px; font-weight: 700; background: var(--panel); clip-path: polygon(11px 0, 100% 0, calc(100% - 11px) 100%, 0 100%); }
.layouts button { width: 40px; }

/* work area */
.work { flex: 1; display: flex; min-height: 0; }
.palette { display: flex; flex-direction: column; width: 477px; flex: none; padding: 8px 5px 0 0; background: var(--panel); }
.palette h2 { display: flex; align-items: center; gap: 7px; height: 27px; margin: 0; padding-left: 8px; font-size: 14px; font-weight: 400; background: #2e3440; border-radius: 4px 4px 0 0; }
.grip { width: 4px; height: 11px; background: repeating-linear-gradient(#c0c4cb 0 1px, transparent 1px 3px); }
.current { display: flex; justify-content: space-between; height: 35px; padding: 8px 0 0 6px; line-height: 30px; }
.layersearch { display: flex; align-items: center; width: 156px; height: 20px; background: var(--field); }
.layersearch input { flex: 1; min-width: 0; border: 0; padding: 0; background: none; }
.layersearch input::placeholder { color: #b4bac4; opacity: 1; }
.toolrow { display: flex; height: 28px; align-items: center; padding-top: 2px; }
.group { display: flex; align-items: center; gap: 7px; }
.first { width: 153px; padding-left: 3px; }
.vrule { width: 1px; height: 21px; background: #20262f; }
.last { margin-left: auto; padding-right: 15px; }
.lists { flex: 1; display: flex; gap: 5px; min-height: 0; }
.filters { display: flex; flex-direction: column; width: 145px; border: 1px solid var(--line); border-left-color: var(--panel); overflow: hidden; }
.fhead { display: flex; justify-content: space-between; align-items: center; height: 29px; padding: 0 5px 0 6px; border-bottom: 1px solid var(--line); }
.tree { flex: 1; list-style: none; margin: 0; padding: 6px 0 0 8px; }
.tree li { display: flex; align-items: center; gap: 2px; height: 22px; white-space: nowrap; }
.tree b { font-weight: 400; margin-left: 2px; padding: 0 2px; background: #7288a8; }
.tree .child { padding-left: 29px; }
.tree .child svg:nth-child(2) { margin-right: 5px; }
.scroll { display: flex; align-items: center; height: 20px; background: #efefef; }
.scroll i { height: 3px; width: 80px; margin-left: 21px; border-radius: 2px; background: #868686; }
.filters .scroll { margin: 0 1px 3px 2px; }
.invert { display: flex; align-items: center; justify-content: space-between; height: 26px; padding: 0 5px 0 6px; border-top: 1px solid var(--line); }
.invert label { display: flex; align-items: center; gap: 5px; }
.invert input { appearance: none; width: 15px; height: 15px; margin: 0; border-radius: 2px; background: #f2f2f2; }
.layertable { flex: 1; display: flex; flex-direction: column; justify-content: space-between; min-width: 0; margin-right: 1px; overflow: hidden; background: linear-gradient(var(--line), var(--line)) 114px 0 / 3px 100% no-repeat; }
table { width: 100%; table-layout: fixed; border-collapse: collapse; }
th, td { padding: 0 0 0 5px; overflow: hidden; white-space: nowrap; text-align: left; font-weight: 400; }
th { height: 30px; background: #454e61; border-right: 1px solid var(--line); }
td { height: 23px; background: #7288a8; padding-left: 2px; }
td svg, .swatch { vertical-align: middle; }
.swatch.small { width: 15px; height: 15px; margin-right: 6px; }
.c-s { width: 23px; }
.c-name { width: 93px; border-right: 3px solid var(--line); }
td.c-name { padding-left: 5px; }
.c-name svg { float: right; margin: 8px 3px 0 0; }
.c-i { width: 23px; padding-left: 4px; }
.c-color { width: 88px; }
.count { margin: 0; padding: 21px 0 0 5px; height: 57px; line-height: 22px; }

.drawing { position: relative; flex: 1; min-width: 0; background: #212830; border-top: 5px solid var(--panel); border-bottom: 5px solid var(--panel); overflow: hidden; }
.model { position: absolute; inset: 0; shape-rendering: crispEdges; }
.ruled { fill: none; }
.red { stroke: #f00; stroke-opacity: .8; }
.green { stroke: #0f0; stroke-opacity: .8; }
.wire { fill: none; stroke: #fff; }
.ucs { font: 200 20px "DejaVu Sans", sans-serif; fill: #fff; }
.viewlabel { position: absolute; left: 4px; top: 6px; display: flex; gap: 2px; }
.viewbuttons { position: absolute; right: 11px; top: 10px; display: flex; gap: 11px; }
.viewcube { position: absolute; right: 14px; top: 80px; width: 166px; }
.face { font-family: "Open Sans", sans-serif; font-weight: 700; fill: #4b5057; }
.face.top { font-size: 11px; }
.face.left { font-size: 7px; }
.face.front { font-size: 13px; }
.compass { font: bold 22px "Open Sans", sans-serif; fill: #adb0b4; }
.wcs { width: 57px; height: 21px; margin: 17px 0 0 56px; gap: 6px; border-radius: 5px; background: #8c909d; border: 2px solid #a2a5b0; color: #d3d5dc; font: 13px/16px "Liberation Sans", sans-serif; }
.navbar { position: absolute; right: 3px; top: 279px; width: 41px; height: 259px; padding: 1px 0; display: flex; flex-direction: column; align-items: center; justify-content: space-between; background: #5a5f63; border-radius: 4px; }
.navbar button { flex-direction: column; gap: 5px; }
.navbar svg { fill: none; stroke: #484d55; stroke-width: 1.5; }
.navbar .solid { fill: #41464e; stroke: none; }
.corner { align-self: flex-end; margin-right: 2px; }
.cursor { position: absolute; right: -3px; bottom: 83px; }
.command { position: absolute; left: 324px; right: 324px; bottom: 1px; height: 32px; display: flex; background: #2b313c; border-radius: 4px; }
.handle { display: flex; align-items: center; width: 72px; padding-left: 5px; gap: 8px; }
.wrench { margin-left: 7px; }
.dots { width: 6px; height: 22px; background: radial-gradient(circle, #c0c4cb 0 1px, transparent 1px) 0 0 / 3px 4px; }
.prompt { flex: 1; display: flex; align-items: center; gap: 8px; padding: 0 5px; background: #babcbc; border-radius: 2px; }
.prompt input { flex: 1; min-width: 0; padding: 0; border: 0; background: none; font: italic 15px "Liberation Mono", monospace; }
.prompt input::placeholder { color: #55585c; opacity: 1; }

/* status bar */
.status { display: flex; gap: 2px; height: 30px; padding: 0 1px 0 2px; }
.filler { flex: 1; margin-right: 3px; background: var(--panel); }
.set { display: flex; background: var(--panel); padding: 1px 0; }
.set button { width: 30px; }
.set .on { background: #5f94c9; width: 28px; margin-right: 2px; }
.set .drop { width: 20px; }
.set .near { width: 15px; }
.set .wide { width: 32px; }
.perf { padding-right: 5px; }
.set .text { width: 60px; }
.set .scale { width: 26px; }
```

FILE: surface.js
```js
// One-sheet hyperboloids drawn as ruled surfaces: 90 straight rulings joining
// a point of the base circle with a point of the top circle.
const RULINGS = 90;
const TWIST = 156.93;

function ruledSurface(id, s) {
  const group = document.getElementById(id);
  let d = "";
  for (let k = 0; k < RULINGS; k++) {
    const top = (s.start + k * 360 / RULINGS) * Math.PI / 180;
    const base = top - s.turn * TWIST * Math.PI / 180;
    const x1 = s.x + s.rx * Math.cos(top), y1 = s.topY + s.ry * Math.sin(top);
    const x2 = s.x + s.rx * Math.cos(base), y2 = s.baseY + s.ry * Math.sin(base);
    d += `<path d="M${x1.toFixed(1)} ${y1.toFixed(1)}L${x2.toFixed(1)} ${y2.toFixed(1)}"/>`;
  }
  group.innerHTML = d;
}

ruledSurface("red", { x: 414, topY: 362, baseY: 635, rx: 158, ry: 79, start: 269.15, turn: 1 });
ruledSurface("green", { x: 875, topY: 357, baseY: 630, rx: 158, ry: 79, start: 268.9, turn: -1 });
```
